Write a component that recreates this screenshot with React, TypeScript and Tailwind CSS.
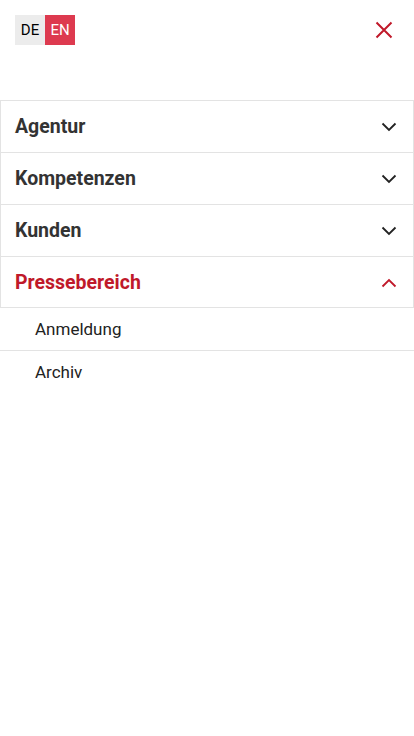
import { useState } from "react";

type Item = { label: string; children?: string[] };

const items: Item[] = [
  { label: "Agentur" },
  { label: "Kompetenzen" },
  { label: "Kunden" },
  { label: "Pressebereich", children: ["Anmeldung", "Archiv"] },
];

function Chevron({ up }: { up?: boolean }) {
  return (
    <svg width="16" height="10" viewBox="0 0 16 10" fill="none" className={up ? "rotate-180" : ""}>
      <path d="M1.5 1.5L8 8L14.5 1.5" stroke="currentColor" strokeWidth="1.8" />
    </svg>
  );
}

export default function App() {
  const [open, setOpen] = useState("Pressebereich");

  return (
    <div className="min-h-[736px] w-[414px] bg-white" style={{ fontFamily: "Roboto, 'Liberation Sans', sans-serif" }}>
      {/* Header */}
      <div className="flex items-center justify-between px-[15px] pt-[15px]">
        <div className="flex text-[15px] leading-[30px]">
          <span className="h-[30px] w-[30px] bg-[#ececec] text-center text-black">DE</span>
          <span className="h-[30px] w-[30px] bg-[#dd3a4f] text-center text-white">EN</span>
        </div>
        <button className="mr-[6px] text-[#c0192a]">
          <svg width="18" height="18" viewBox="0 0 18 18" fill="none">
            <path d="M1.5 1.5L16.5 16.5M16.5 1.5L1.5 16.5" stroke="currentColor" strokeWidth="2" />
          </svg>
        </button>
      </div>

      {/* Menu */}
      <nav className="mt-[55px]">
        {items.map((item, idx) => {
          const isOpen = open === item.label;
          const last = idx === items.length - 1;
          return (
            <div key={item.label}>
              <button
                onClick={() => setOpen(isOpen ? "" : item.label)}
                className={`flex h-[52px] w-full items-center justify-between border-x border-t border-[#e3e3e3] pl-[14px] pr-[16px] pt-[1px] text-[19.5px] font-bold ${
                  isOpen ? "text-[#c0192a]" : "text-[#333333]"
                } ${last ? "border-b" : ""}`}
              >
                {item.label}
                <span className={isOpen ? "text-[#c0192a]" : "text-[#222]"}>
                  <Chevron up={isOpen} />
                </span>
              </button>
              {isOpen && item.children && (
                <div>
                  {item.children.map((c, i) => (
                    <div
                      key={c}
                      className={`flex h-[43px] items-center pl-[35px] pt-[1px] text-[17px] text-[#222] ${
                        i < item.children!.length - 1 ? "border-b border-[#e3e3e3]" : ""
                      }`}
                    >
                      {c}
                    </div>
                  ))}
                </div>
              )}
            </div>
          );
        })}
      </nav>
    </div>
  );
}
